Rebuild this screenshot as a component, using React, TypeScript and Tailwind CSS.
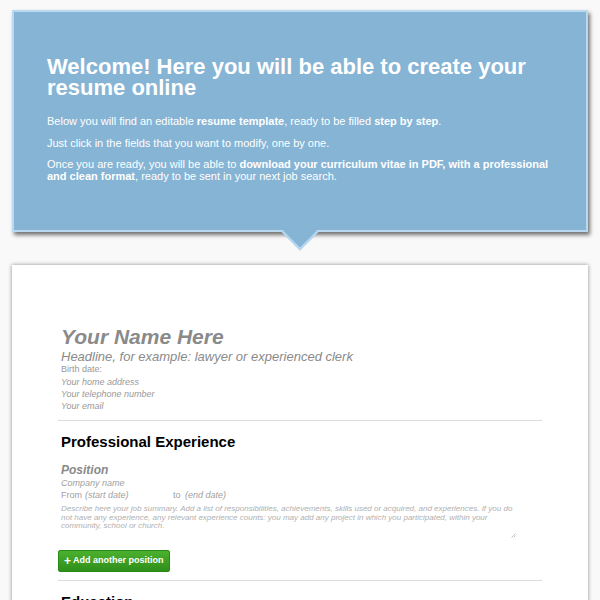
import React from 'react';

const font = { fontFamily: '"Liberation Sans", Arial, sans-serif' };

const Intro: React.FC = () => (
  <div className="relative mx-[12px] mt-[10px] h-[222px] border-2 border-[#b9d9f0] bg-[#86b4d5] px-[33px] pt-[44px] text-white shadow-[2px_3px_4px_rgba(0,0,0,0.55)]">
    <h1 className="text-[22px] font-bold leading-[21px]">
      Welcome! Here you will be able to create your resume online
    </h1>
    <p className="mt-[17px] text-[11px] leading-[12px]">
      Below you will find an editable <b>resume template</b>, ready to be filled <b>step by step</b>.
    </p>
    <p className="mt-[10px] text-[11px] leading-[12px]">
      Just click in the fields that you want to modify, one by one.
    </p>
    <p className="mt-[9px] text-[11px] leading-[12px]">
      Once you are ready, you will be able to{' '}
      <b>download your curriculum vitae in PDF, with a professional and clean format</b>, ready to be sent in your next job search.
    </p>
    {/* pointer */}
    <div className="absolute bottom-[-15px] left-1/2 h-[26px] w-[26px] -translate-x-1/2 rotate-45 border-b-2 border-r-2 border-[#b9d9f0] bg-[#86b4d5]" />
  </div>
);

const Rule: React.FC = () => <div className="h-px bg-[#dcdcdc]" />;

const Resume: React.FC = () => (
  <div className="mx-[12px] mt-[33px] bg-white pl-[46px] pr-[46px] pt-[60px] shadow-[0_0_4px_rgba(0,0,0,0.45)]">
    <div className="px-[3px] pb-[8px] text-[#8a8a8a]">
      <div className="text-[21px] font-bold italic leading-[24px]">Your Name Here</div>
      <div className="text-[13px] italic leading-[15px]">Headline, for example: lawyer or experienced clerk</div>
      <div className="text-[9px] leading-[11px] text-[#999]">Birth date:</div>
      <div className="mt-[1px] text-[9px] italic leading-[12px] text-[#999]">Your home address</div>
      <div className="text-[9px] italic leading-[12px] text-[#999]">Your telephone number</div>
      <div className="text-[9px] italic leading-[12px] text-[#999]">Your email</div>
    </div>
    <Rule />
    <div className="px-[3px] pt-[12px]">
      <h2 className="text-[15px] font-bold leading-[18px] text-black">Professional Experience</h2>
      <div className="mt-[12px] text-[12px] font-bold italic leading-[14px] text-[#8a8a8a]">Position</div>
      <div className="text-[9px] italic leading-[12px] text-[#a0a0a0]">Company name</div>
      <div className="flex text-[9px] leading-[12px] text-[#a0a0a0]">
        <span className="w-[24px]">From</span>
        <span className="w-[88px] italic">(start date)</span>
        <span className="w-[12px]">to</span>
        <span className="italic">(end date)</span>
      </div>
      <div className="relative mt-[4px] h-[37px] pr-[20px] text-[8px] italic leading-[8.5px] text-[#b0b0b0]">
        Describe here your job summary. Add a list of responsibilities, achievements, skills used or acquired, and experiences. If you do not have any experience, any relevant experience counts: you may add any project in which you participated, within your community, school or church.
        <svg className="absolute bottom-[4px] right-[23px]" width="5" height="5" viewBox="0 0 5 5">
          <path d="M4.5 0.5 L0.5 4.5 M4.5 2.5 L2.5 4.5" stroke="#b5b5b5" strokeWidth="0.8" />
        </svg>
      </div>
    </div>
    <div className="pb-[8px] pt-[8px]">
      <button className="flex h-[22px] items-center gap-[2px] rounded-[2px] border border-[#2a8a18] bg-gradient-to-b from-[#4bb02e] to-[#2f8f1a] px-[5px] text-[9px] font-bold text-white">
        <span className="text-[12px] leading-none">+</span>Add another position
      </button>
    </div>
    <Rule />
    <div className="px-[3px] pt-[12px]">
      <h2 className="text-[15px] font-bold leading-[18px] text-black">Education</h2>
      <div className="h-[200px]" />
    </div>
  </div>
);

export default function App() {
  return (
    <div className="h-[600px] overflow-hidden bg-[#f9f9f9]" style={font}>
      <Intro />
      <Resume />
    </div>
  );
}
